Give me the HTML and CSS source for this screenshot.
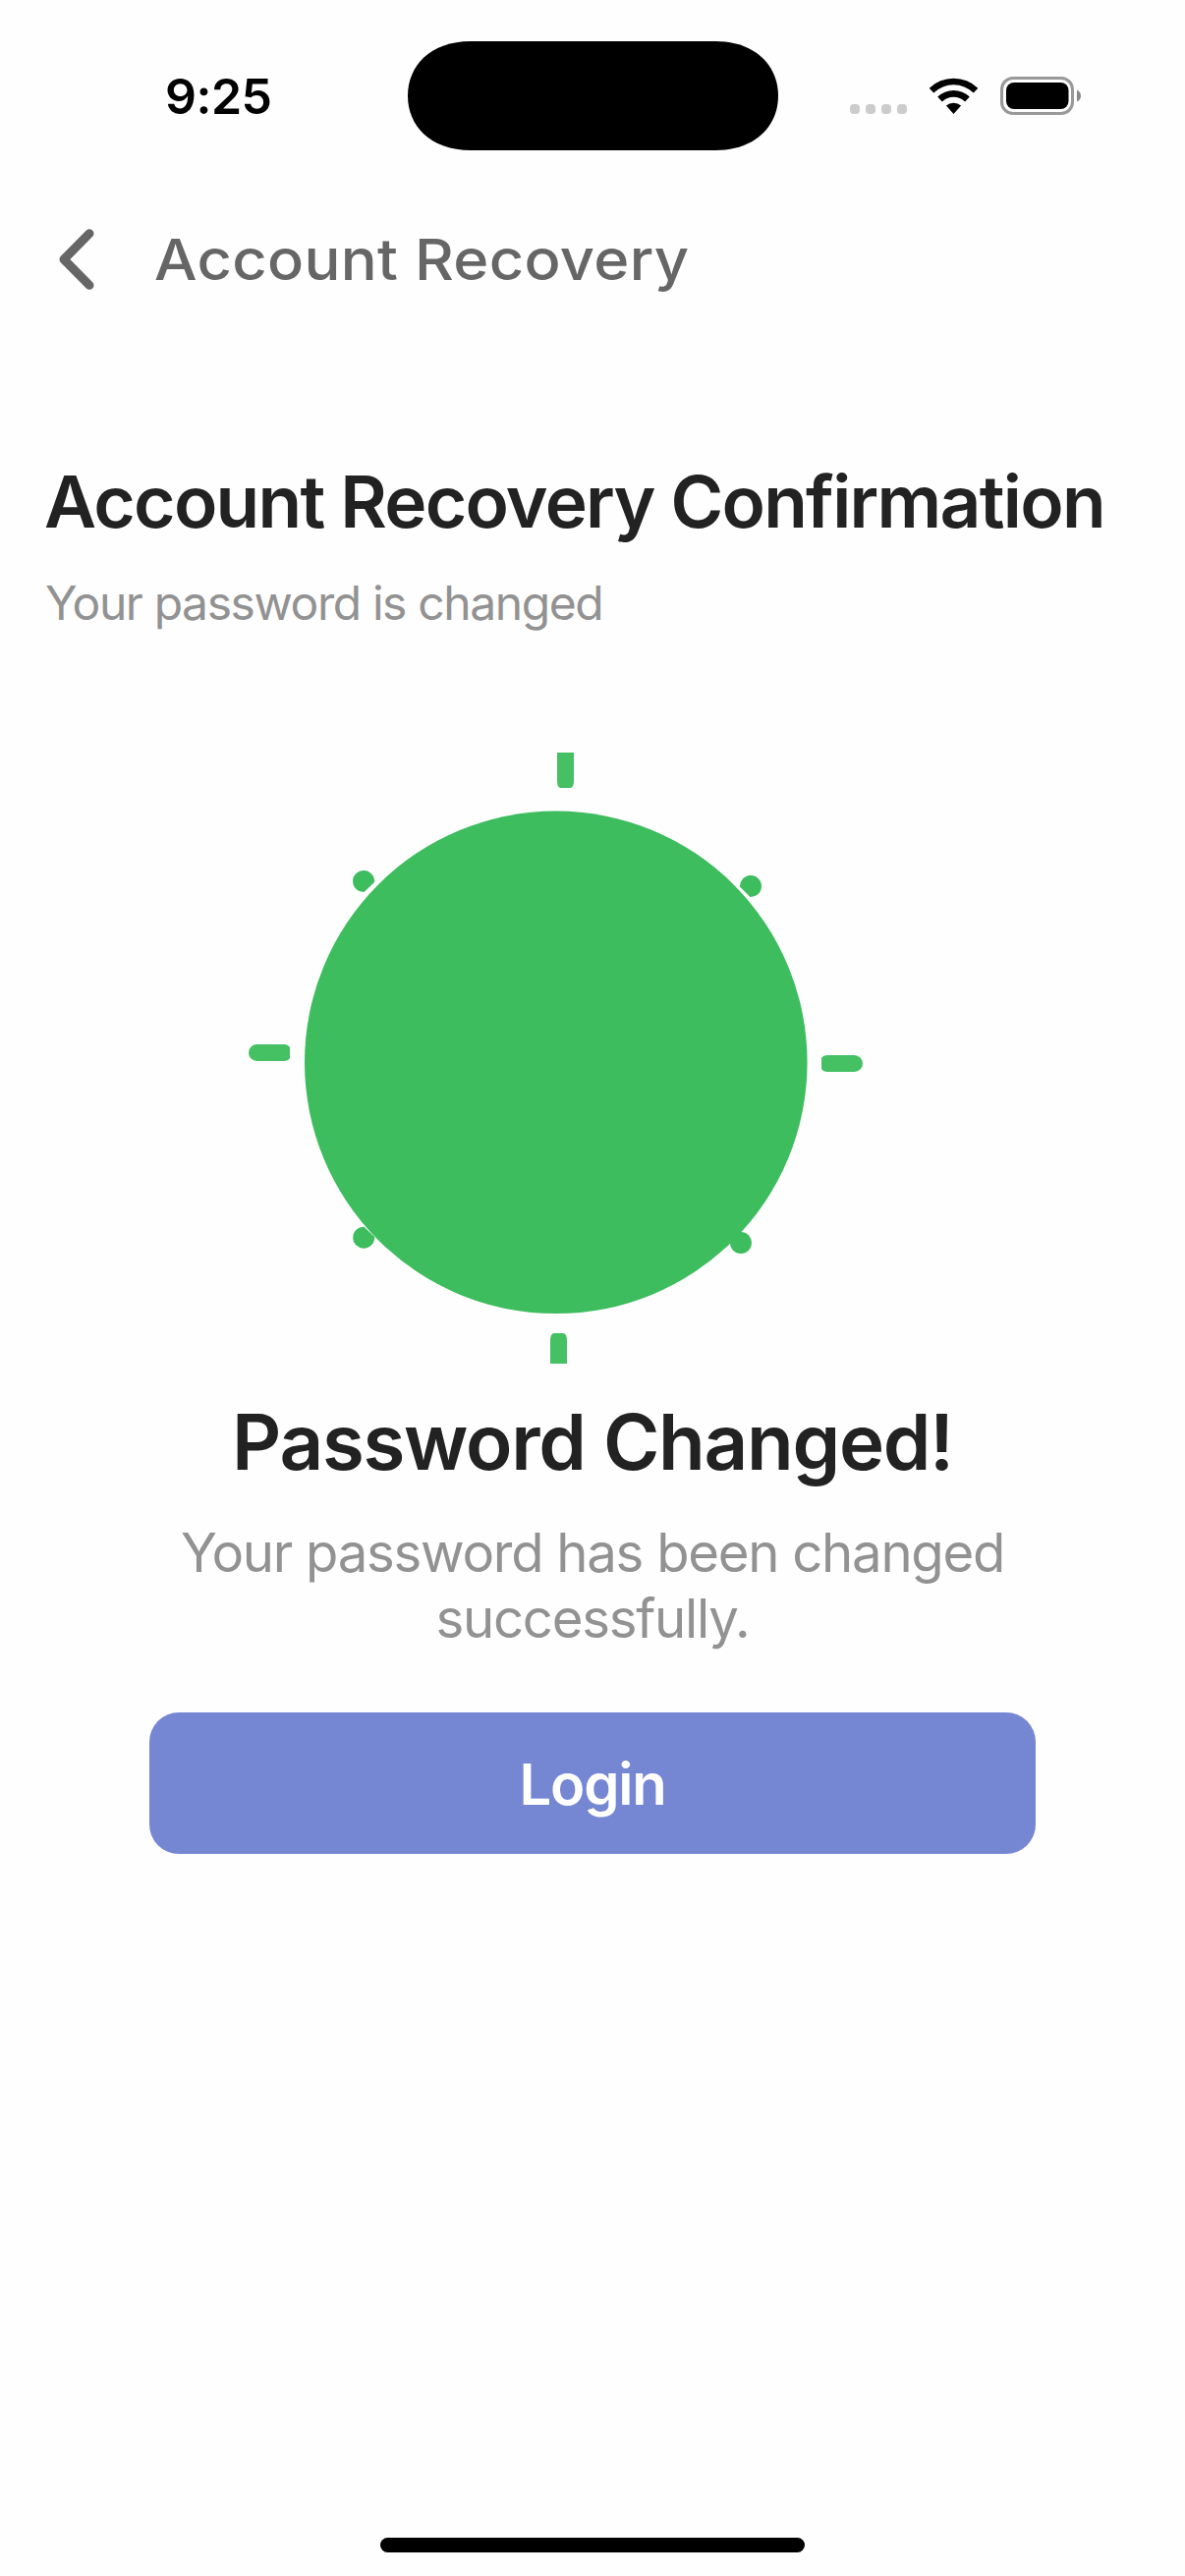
FILE: index.html
```html
<!DOCTYPE html>
<html lang="en">
<head>
<meta charset="utf-8">
<title>Account Recovery</title>
<link rel="stylesheet" href="styles.css">
</head>
<body>
<div class="screen">
  <header class="status-bar">
    <div class="clock">9:25</div>
    <div class="island"><svg viewBox="0 0 377 111" width="377" height="111"><path d="M64 0H313C354 0 377 25 377 55.500S354 111 313 111H64C23 111 0 86 0 55.500S23 0 64 0Z"/></svg></div>
    <div class="indicators">
      <div class="signal"><i></i><i></i><i></i><i></i></div>
      <svg class="wifi" viewBox="0 0 51 37" width="51" height="37">
        <path d="M0.700 10.800A35.500 35.500 0 0 1 50.300 10.800L45.800 15.600A29 29 0 0 0 5.200 15.600Z"/>
        <path d="M9.200 19.600A23.500 23.500 0 0 1 41.800 19.600L37.200 24.400A17 17 0 0 0 13.800 24.400Z"/>
        <path d="M17.900 28.600A11.500 11.500 0 0 1 33.100 28.600L25.500 37Z"/>
      </svg>
      <svg class="battery" viewBox="0 0 83 39" width="83" height="39">
        <rect x="1.500" y="1.500" width="72" height="36" rx="11.500" fill="none" stroke="#999" stroke-width="3"/>
        <rect x="6" y="6" width="63.500" height="27" rx="8"/>
        <path d="M78 13.500Q82 15.500 82 19.500T78 25.500Z" fill="#888"/>
      </svg>
    </div>
  </header>
  <nav class="nav">
    <svg class="back" viewBox="0 0 36 62" width="36" height="62"><path d="M31 4.700L5 31L31 57.300"/></svg>
    <span class="nav-title">Account Recovery</span>
  </nav>
  <main class="content">
    <h1>Account Recovery Confirmation</h1>
    <p class="lead">Your password is changed</p>
    <svg class="badge" viewBox="240 760 650 635" width="650" height="635">
      <circle cx="565.800" cy="1081.300" r="255.800"/>
      <g class="rays">
        <path d="M567 766H584V794Q584 802 580.500 802H570.500Q567 802 567 794Z"/>
        <path d="M560 1388V1365Q560 1357 564 1357H573Q577 1357 577 1365V1388Z"/>
        <path d="M261.500 1063H289Q293 1063 295 1066V1077Q293 1080 289 1080H261.500A8.500 8.500 0 0 1 261.500 1063Z"/>
        <path d="M869.500 1074H842Q838 1074 836 1077V1088Q838 1091 842 1091H869.500A8.500 8.500 0 0 0 869.500 1074Z"/>
      </g>
      <path d="M381 898L370.500 908A11 11 0 1 1 381 898Z"/>
      <path d="M753 902.500L763.500 913A11 11 0 1 0 753 902.500Z"/>
      <path d="M370.500 1248.700L381.200 1259A11 11 0 1 1 370.500 1248.700Z"/>
      <circle cx="754" cy="1265" r="11"/>
    </svg>
    <h2>Password Changed!</h2>
    <p class="message">Your password has been changed<br>successfully.</p>
    <button class="login">Login</button>
  </main>
  <footer class="home"><div class="home-bar"></div></footer>
</div>
</body>
</html>
```
FILE: styles.css
```css
* { box-sizing: border-box; }
body { margin: 0; background: #fefefe; font-family: Inter, "Liberation Sans", sans-serif; }
.screen { display: flex; flex-direction: column; width: 1206px; height: 2622px; }

.status-bar { display: grid; grid-template-columns: 415px 377px 1fr; align-items: center; height: 195px; }
.clock { padding-left: 168px; font-size: 50px; font-weight: 580; line-height: 60px; letter-spacing: -0.5px; color: #000; }
.island { height: 111px; margin-bottom: 1px; }
.island svg { display: block; }
.indicators { display: flex; align-items: center; padding-left: 73px; }
.signal { display: flex; gap: 6px; margin: 27px 22px 0 0; }
.signal i { width: 10px; height: 10px; border-radius: 4px; background: #ccc; }
.wifi { margin-right: 22px; }

.nav { display: flex; align-items: center; height: 138px; margin-bottom: 1px; padding-left: 60px; color: #666; }
.back { margin-right: 61px; fill: none; stroke: #666; stroke-width: 9; stroke-linecap: round; stroke-linejoin: round; }
.nav-title { font-size: 58px; font-weight: 500; line-height: 70px; letter-spacing: 0.3px; transform: scaleX(1.06); transform-origin: left center; }

.content { display: flex; flex-direction: column; align-items: center; padding: 133px 0 0; }
h1 { align-self: flex-start; margin: 0 0 30px 45px; font-size: 73px; font-weight: 600; line-height: 88px; letter-spacing: -1.72px; color: #222; white-space: nowrap; }
.lead { align-self: flex-start; margin: 0 0 117px 46px; font-size: 48px; line-height: 58px; letter-spacing: -1.4px; color: #929292; }
.badge { display: block; align-self: flex-start; margin-left: 240px; fill: #3dbd5d; }
.rays { fill: #45c164; }
h2 { margin: 26px 0 32px; font-size: 78px; font-weight: 600; line-height: 94px; letter-spacing: -1.3px; color: #222; }
.message { margin: 0 0 62px; font-size: 54.5px; line-height: 67px; letter-spacing: -1.27px; text-align: center; color: #929292; }
.login { width: 902px; height: 144px; padding: 2px 0 0; border: 0; border-radius: 30px; background: #7586d3; color: #fff; font: 600 58px/70px Inter, "Liberation Sans", sans-serif; letter-spacing: -1.2px; }

.home { margin-top: auto; padding-bottom: 24px; }
.home-bar { width: 432px; height: 15px; margin: 0 auto; border-radius: 8px; background: #000; }
```
